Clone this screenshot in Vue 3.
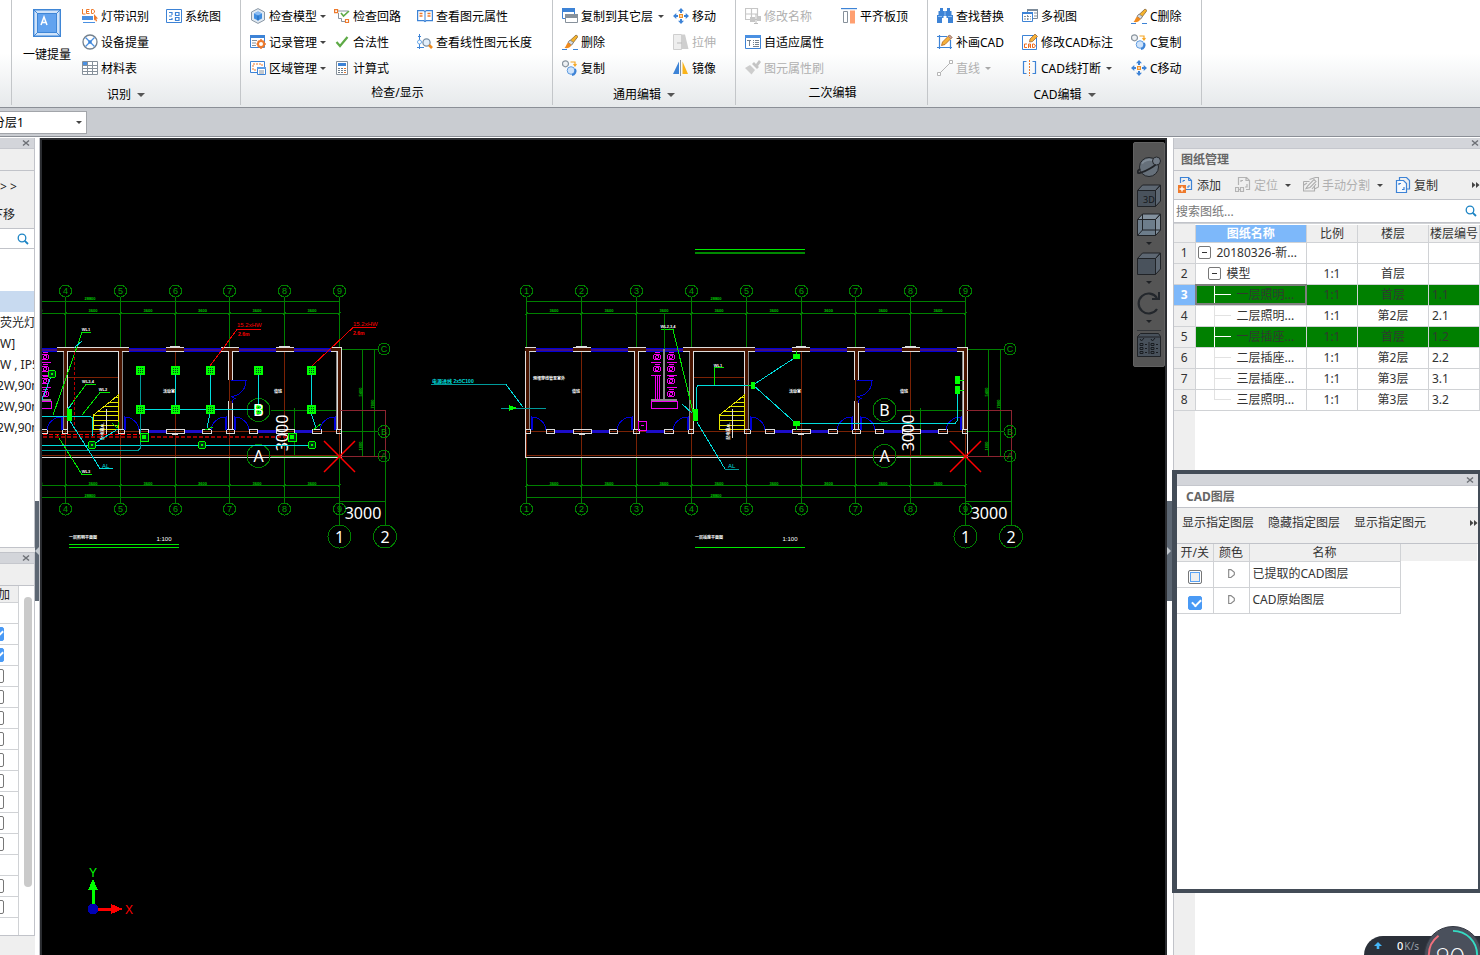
<script setup>
import { ref } from 'vue'

const groups = [
  {
    key: 'identify', caption: '识别', menu: true, big: { icon: 'extract', label: '一键提量' },
    cols: [
      [{ icon: 'led', label: '灯带识别' }, { icon: 'device', label: '设备提量' }, { icon: 'sheet', label: '材料表' }],
      [{ icon: 'system', label: '系统图' }]
    ]
  },
  {
    key: 'inspect', caption: '检查/显示', menu: false,
    cols: [
      [{ icon: 'model', label: '检查模型', menu: true }, { icon: 'record', label: '记录管理', menu: true }, { icon: 'region', label: '区域管理', menu: true }],
      [{ icon: 'loop', label: '检查回路' }, { icon: 'tick', label: '合法性' }, { icon: 'calc', label: '计算式' }],
      [{ icon: 'book', label: '查看图元属性' }, { icon: 'length', label: '查看线性图元长度' }]
    ]
  },
  {
    key: 'common', caption: '通用编辑', menu: true,
    cols: [
      [{ icon: 'layers', label: '复制到其它层', menu: true }, { icon: 'brush', label: '删除' }, { icon: 'copy', label: '复制' }],
      [{ icon: 'move', label: '移动' }, { icon: 'stretch', label: '拉伸', off: true }, { icon: 'mirror', label: '镜像' }]
    ]
  },
  {
    key: 'second', caption: '二次编辑', menu: false,
    cols: [
      [{ icon: 'rename', label: '修改名称', off: true }, { icon: 'adapt', label: '自适应属性' }, { icon: 'paint', label: '图元属性刷', off: true }],
      [{ icon: 'align', label: '平齐板顶' }]
    ]
  },
  {
    key: 'cadedit', caption: 'CAD编辑', menu: true,
    cols: [
      [{ icon: 'find', label: '查找替换' }, { icon: 'pencil', label: '补画CAD' }, { icon: 'line', label: '直线', off: true, menu: true }],
      [{ icon: 'views', label: '多视图' }, { icon: 'cadnote', label: '修改CAD标注' }, { icon: 'break', label: 'CAD线打断', menu: true }],
      [{ icon: 'brush', label: 'C删除' }, { icon: 'copy', label: 'C复制' }, { icon: 'move', label: 'C移动' }]
    ]
  }
]

const floor = ref('分层1')
const search = ref('')
const components = [
  { text: '' }, { text: '' }, { text: '', sel: true },
  { text: '荧光灯' }, { text: 'W]' }, { text: 'W , IP5' },
  { text: '2W,90m', cut: true }, { text: '2W,90m', cut: true }, { text: '2W,90m', cut: true }
]
const flags = ref([null, true, true, false, false, false, false, false, false, false, false, false, null, false, false])

const drawings = [
  { name: '20180326-新...', level: 0, ratio: '', floor: '', code: '' },
  { name: '模型', level: 1, ratio: '1:1', floor: '首层', code: '' },
  { name: '一层照明...', level: 2, ratio: '1:1', floor: '首层', code: '1.1', on: true, cur: true },
  { name: '二层照明...', level: 2, ratio: '1:1', floor: '第2层', code: '2.1' },
  { name: '一层插座...', level: 2, ratio: '1:1', floor: '首层', code: '1.2', on: true },
  { name: '二层插座...', level: 2, ratio: '1:1', floor: '第2层', code: '2.2' },
  { name: '三层插座...', level: 2, ratio: '1:1', floor: '第3层', code: '3.1' },
  { name: '三层照明...', level: 2, ratio: '1:1', floor: '第3层', code: '3.2', last: true }
]
const layers = ref([{ name: '已提取的CAD图层', on: false }, { name: 'CAD原始图层', on: true }])

const plans = [{ key: 'light', dx: -626 }, { key: 'socket', dx: 0 }]
const axes = Array.from({ length: 9 }, (_, i) => ({ n: i + 1, x: Math.round(526 + i * 54.9) + 0.5 }))
const spans = axes.slice(0, 8).map((a, i) => (a.x + axes[i + 1].x) / 2)
const topWindows = [536, 591, 646, 755, 810, 865, 920]
const topWalls = [[525, 536], [573, 591], [628, 646], [683, 755], [792, 810], [847, 865], [902, 920], [957, 968]]
const bottomWindows = [[554, 573], [591, 609], [646, 664], [774, 792], [810, 828], [883, 902], [920, 938]]
const bottomWalls = [[525, 530], [546, 554], [573, 591], [609, 617], [633, 639], [664, 673], [688, 693], [744, 750], [765, 774], [792, 810], [828, 837], [852, 860], [875, 883], [902, 920], [938, 947], [962, 967]]
const partitions = [[525, 351, 430], [634, 351, 430], [689, 351, 430], [744, 351, 430], [854, 351, 380], [854, 401, 430], [963, 351, 430]]
const doorsRight = [531, 750, 860]
const doorsLeft = [632, 688, 852, 961]
const steps = [[740, 397], [735, 402], [730, 406], [724, 411], [719, 415], [719, 420], [719, 425], [719, 429]]
const bigAxes = [{ t: '1', x: 965.5, y: 536.5 }, { t: '2', x: 1011, y: 536.5 }, { t: 'A', x: 884.5, y: 456 }, { t: 'B', x: 884.5, y: 410 }]
const sideAxes = [{ t: 'C', y: 349 }, { t: 'B', y: 431.5 }, { t: 'A', y: 456 }]
const lampX = [140, 175, 210, 258, 311]
const pans = [[657, 357], [657, 369], [671, 357], [671, 369], [671, 381], [671, 394]]
</script>

<template>
  <div class="app">
    <svg class="defs" aria-hidden="true">
      <symbol id="i-extract" viewBox="0 0 28 28">
        <path d="M.7 .7h26.6v26.6H.7z" fill="#cfe3fa" stroke="#3f86d6" stroke-width="1.4" /><path d="M4.500 4.500h19v19h-19z" fill="#62a3ef" stroke="#3f86d6" /><path d="M1 1l4 4M27 1l-4 4M1 27l4-4M27 27l-4-4" stroke="#3f86d6" />
        <path d="M8 16l3-8 3 8M9 13.500h4" fill="none" stroke="#fff" stroke-width="1.500" />
      </symbol>
      <symbol id="i-led" viewBox="0 0 16 16">
        <path d="M.500 1v5h3M7.500 1.500h-3v4h3M4.500 3.500H7M9.500 1.500h1.500l1.500 1.200v1.600l-1.500 1.200H9.500z" fill="none" stroke="#ee7a2c" />
        <path d="M0 8h11v4H0z" fill="#4a90e2" /><path d="M1 14.500h12" stroke="#4a90e2" /><path d="M12 6l4 4.500-1.800.3 1 2.200-1.200.6-1-2.200L12 12.500z" fill="#ee7a2c" />
      </symbol>
      <symbol id="i-device" viewBox="0 0 16 16"><circle cx="8" cy="8" r="7" fill="#fff" stroke="#74808c" stroke-width="1.300" /><path d="M3.500 3.500l9 9M12.500 3.500l-9 9" stroke="#4a90e2" stroke-width="1.300" /><circle cx="8" cy="8" r="1.800" fill="#3d83d6" /></symbol>
      <symbol id="i-sheet" viewBox="0 0 16 16"><path d="M.500 1.500h15v13H.500z" fill="#fff" stroke="#87919b" /><path d="M1 2h4v3H1z" fill="#4a90e2" /><path d="M.500 5.500h15M.500 8.500h15M.500 11.500h15M5.500 1.500v13M10.500 1.500v13" stroke="#87919b" /></symbol>
      <symbol id="i-system" viewBox="0 0 16 16"><path d="M.500 1.500h15v13H.500z" fill="#fff" stroke="#3d83d6" /><path d="M3 4.500h3M3 8h3M3 11.500h3M6 4v3M6 10v2M9.500 4.500h3.500v3H9.500zM9.500 9.500h3.500v3H9.500z" fill="none" stroke="#3d83d6" stroke-width="1.200" /></symbol>
      <symbol id="i-model" viewBox="0 0 16 16"><path d="M8 .600l6.500 3.400v8L8 15.400 1.500 12V4z" fill="#dfe9f3" stroke="#8b98a5" /><path d="M8 3.500l4 2v5l-4 2-4-2v-5z" fill="#3f8de0" /><path d="M4 5.500l4 2 4-2-4-2z" fill="#8bbcf2" /><path d="M8 7.500v5" stroke="#1f66b5" /></symbol>
      <symbol id="i-record" viewBox="0 0 16 16"><path d="M.500 1.500h14v12H.500z" fill="#fff" stroke="#3d83d6" /><path d="M0 1h15v3H0z" fill="#3d83d6" /><path d="M2 6.500h5M2 9h4M2 11.500h4" stroke="#87919b" /><circle cx="11" cy="10" r="3" fill="none" stroke="#ee7a2c" stroke-width="2" /><path d="M11 5v2M11 13v2M6.500 10h1.500M14 10h2M8 7l1 1M14 7l-1 1M8 13l1-1M14 13l-1-1" stroke="#ee7a2c" stroke-width="1.500" /></symbol>
      <symbol id="i-region" viewBox="0 0 16 16"><path d="M.500 1.500h14v11H.500z" fill="#fff" stroke="#3d83d6" /><path d="M3 4h9v6H3z" fill="none" stroke="#ee7a2c" stroke-dasharray="2 1" /><path d="M7.500 7.500h8v7h-8z" fill="#fff" stroke="#3d83d6" /><path d="M7 7h9v2H7z" fill="#5b9be6" /><path d="M9 11h5M9 13h5" stroke="#87919b" /></symbol>
      <symbol id="i-loop" viewBox="0 0 16 16"><path d="M.600 1.600h3v3h-3zM11.500 11.500h3v3h-3z" fill="#fff" stroke="#ee7a2c" stroke-width="1.200" /><path d="M4 3h10M4.500 5v5.500h3v3H11" fill="none" stroke="#8a959f" /><path d="M7 5l2.500 3L15 3" fill="none" stroke="#5eaa46" stroke-width="1.600" /></symbol>
      <symbol id="i-tick" viewBox="0 0 16 16"><path d="M2.500 8l3.500 4 7.500-9" fill="none" stroke="#5eaa46" stroke-width="2.200" /></symbol>
      <symbol id="i-calc" viewBox="0 0 16 16"><path d="M2.500 1.500h11v13h-11z" fill="#fff" stroke="#87919b" /><path d="M4 3h8v3H4z" fill="#3d83d6" /><path d="M4 8.500h8M4 10.500h8M4 12.500h8" stroke="#6f7c88" stroke-dasharray="2 1" /><path d="M10 8.500h2M10 12.500h2" stroke="#ee7a2c" /></symbol>
      <symbol id="i-book" viewBox="0 0 16 16"><path d="M.600 2.600h6l1.400.900 1.400-.900h6v10h-6l-1.400 1-1.400-1h-6z" fill="#fff" stroke="#3d83d6" stroke-width="1.200" /><path d="M8 3.500v10" stroke="#3d83d6" /><path d="M2.500 5.500h3M2.500 8h3M10.500 5.500h3M10.500 8h3" stroke="#ee7a2c" stroke-width="1.300" /></symbol>
      <symbol id="i-length" viewBox="0 0 16 16"><path d="M2.500 0v15M1 2.500h3M0 13.500h7" stroke="#3d83d6" /><circle cx="2.500" cy="8" r="2" fill="#fff" stroke="#6aa8e8" /><circle cx="9.500" cy="8.500" r="3.600" fill="#e3effb" stroke="#7990a6" stroke-width="1.300" /><path d="M12 11l3 3" stroke="#ee8a1c" stroke-width="2.600" /></symbol>
      <symbol id="i-layers" viewBox="0 0 16 16"><path d="M.500 .500h12v10H.500z" fill="#fff" stroke="#3d83d6" /><path d="M0 0h13v4H0z" fill="#3d83d6" /><path d="M3.500 6.500h12v8h-12z" fill="#fff" stroke="#87919b" /><path d="M3 6h13v4H3z" fill="#87919b" /></symbol>
      <symbol id="i-brush" viewBox="0 0 16 16"><path d="M14 1l2 1.500L9.500 11 6 8.500z" fill="#f5b32c" stroke="#8c6a3a" stroke-width=".800" /><path d="M8 6l3.500 2.500-2 2.500L6 8.500z" fill="#d7dbe0" stroke="#6d737a" stroke-width=".700" /><path d="M6 8.500L9.500 11c-1.500 3-4 3.500-7 3 1.500-1.500 2-4 3.500-5.500z" fill="#f08a1d" /><path d="M0 15.500h5M11 15.500h5" stroke="#3d83d6" /></symbol>
      <symbol id="i-copy" viewBox="0 0 16 16"><circle cx="3.500" cy="3.800" r="3" fill="#eef1f4" stroke="#8a959f" stroke-width="1.200" /><circle cx="9" cy="10.500" r="3.800" fill="#cfe3fa" stroke="#5e9be0" /><path d="M13 9a4 4 0 0 1-3 6" fill="none" stroke="#3d83d6" stroke-width="2" /><path d="M8.500 2h4.500v3M11.500 4l1.500 2 1.500-2" fill="none" stroke="#f5a623" stroke-width="1.200" /></symbol>
      <symbol id="i-move" viewBox="0 0 16 16"><path d="M6.600 6.600h2.800v2.800H6.600z" fill="#fff" stroke="#f0932b" stroke-width="1.200" /><path d="M8 0l3 3.300H9V5H7V3.300H5zM8 16l3-3.300H9V11H7v1.700H5zM0 8l3.300-3v2H5v2H3.300v2zM16 8l-3.300-3v2H11v2h1.700v2z" fill="#3d83d6" /></symbol>
      <symbol id="i-stretch" viewBox="0 0 16 16"><path d="M.500 .500h8v15h-8z" fill="#eee" stroke="#cfcfcf" /><path d="M9 .500h3L15.500 15H9z" fill="#cfcfcf" /><path d="M4 9h5" stroke="#bbb" /></symbol>
      <symbol id="i-mirror" viewBox="0 0 16 16"><path d="M6 1.500V14H0z" fill="#3d83d6" /><path d="M9.500 1.500V14H15z" fill="#f9b31a" /><path d="M7.500 0v16" stroke="#8a959f" /></symbol>
      <symbol id="i-rename" viewBox="0 0 16 16"><path d="M.500 .500h12v11H.500zM.500 6h12M6.500 .500v11" fill="none" stroke="#c6c6c6" stroke-width="1.200" /><path d="M5 9h5v5H5zM12 8h4v5h-4z" fill="#c6c6c6" /><path d="M11 6v10M9 15.500h4" stroke="#bbb" /></symbol>
      <symbol id="i-adapt" viewBox="0 0 16 16"><path d="M.500 1.500h15v13H.500z" fill="#fff" stroke="#3d83d6" /><path d="M0 1h16v3H0z" fill="#4a90e2" /><path d="M2 6.500h4M4.500 6v6M8 6.500h1M10 6.500h4M8 8.500h1M10 8.500h4M8 10.500h1M10 10.500h4M8 12.500h6" stroke="#75828f" /></symbol>
      <symbol id="i-paint" viewBox="0 0 16 16"><path d="M0 8l5-3 5 5-3.500 4.500z" fill="#cdcdcd" /><path d="M7 4l2-2 5 5-2 2zM11 4l3-4 2 2-3 4z" fill="#c4c4c4" /></symbol>
      <symbol id="i-align" viewBox="0 0 16 16"><path d="M0 .500h16" stroke="#3d83d6" stroke-width="1.400" /><path d="M2.500 3.500h4v11h-4z" fill="#fff" stroke="#87919b" /><path d="M9 2.500h5v13H9z" fill="#ff9f70" /></symbol>
      <symbol id="i-find" viewBox="0 0 16 16"><path d="M3 0h3v3h4V0h3v3h1.500v4H16v8h-5v-5H9.500V8h-3v2H5v5H0V7h1.500V3H3z" fill="#3d83d6" /><path d="M1 8.500h4M11 8.500h4M8 3v5" stroke="#8fc0f4" /></symbol>
      <symbol id="i-pencil" viewBox="0 0 16 16"><path d="M2.500 1v14M13.500 6v9M0 2.500h10M0 13.500h15" fill="none" stroke="#3d83d6" stroke-width="1.200" /><path d="M12.500 1L15 3.500l-7 7-3.500 1 1-3.500z" fill="#f5b13b" stroke="#b1641c" stroke-width=".800" /><path d="M12.500 1L15 3.500l-1.300 1.300L11.200 2.300z" fill="#d8a1a1" stroke="#666" stroke-width=".500" /></symbol>
      <symbol id="i-line" viewBox="0 0 16 16"><path d="M2 14L14 2" stroke="#b5b5b5" /><path d="M.500 12.500h3v3h-3zM12.500 .500h3v3h-3z" fill="#fff" stroke="#b5b5b5" /></symbol>
      <symbol id="i-views" viewBox="0 0 16 16"><path d="M5.500 1.500h10v9h-10z" fill="#fff" stroke="#7d8b99" /><path d="M5 1h11v2H5z" fill="#7d8b99" /><path d="M.500 4.500h10v9H.500z" fill="#fff" stroke="#3d83d6" /><path d="M0 4h11v2H0z" fill="#3d83d6" /><path d="M2 8.500h7M2 11h7M5.500 7v5" stroke="#87919b" stroke-dasharray="2 1" /><path d="M12 5h3M12 8h3" stroke="#87919b" /></symbol>
      <symbol id="i-cadnote" viewBox="0 0 16 16"><path d="M.500 1.500h14v14H.500z" fill="#fff" stroke="#3d83d6" /><path d="M5 10H2.500v3.500H5M6.500 14v-4h2v4M6.500 12h2M10.500 10h1.500l1.200 1v1.500l-1.200 1h-1.500z" fill="none" stroke="#ee6a1c" /><path d="M13 0l2.500 2.500-5 5-3 .500.500-3z" fill="#f5b13b" stroke="#9a6a3c" stroke-width=".800" /></symbol>
      <symbol id="i-break" viewBox="0 0 16 16"><path d="M4.500 1.500h-3v12h3M10.500 1.500h3v12h-3" fill="none" stroke="#3d83d6" stroke-width="1.200" /><path d="M7.500 0v16" stroke="#ee7a2c" stroke-dasharray="2 1" /></symbol>
      <symbol id="i-add" viewBox="0 0 16 16"><path d="M2.500 6V.500h8l3 3v9H8" fill="none" stroke="#3d83d6" stroke-width="1.200" /><path d="M5 5V3.500h2M11 8v2H9M10.500 .500v3h3" fill="none" stroke="#3d83d6" /><path d="M0 8h8v8H0z" fill="#ee7a2c" /><path d="M4 9.500v5M1.500 12h5" stroke="#fff" stroke-width="1.400" /></symbol>
      <symbol id="i-locate" viewBox="0 0 16 16"><path d="M3.500 8V.500h8l3 3v9H11M6 5V3.500h2M12 7v3h-2M.500 10.500h3v4h-3zM5.500 10.500h3v4h-3zM3 12.500h3M11 .500v3h3" fill="none" stroke="#b3b3b3" stroke-width="1.200" /></symbol>
      <symbol id="i-split" viewBox="0 0 16 16"><path d="M.500 4.500h6M11.500 9v5H.500V4.500M6.500 2.500l6-2h3v9.500l-4 2M3 11.500l2-3 6-6 2 2-6 6zM1 8l3-2M9 12l4-5" fill="none" stroke="#aeaeae" stroke-width="1.100" /></symbol>
      <symbol id="i-dup" viewBox="0 0 16 16"><path d="M4.500 3V.500h7l3 3V12H12" fill="none" stroke="#3d83d6" stroke-width="1.200" /><path d="M1.500 3.500h7l3 3v9h-10zM4 8V6.500h2M9 10v2.500H7" fill="#f5f9fe" stroke="#3d83d6" stroke-width="1.200" /></symbol>
      <symbol id="i-search" viewBox="0 0 12 12"><circle cx="5" cy="5" r="3.800" fill="none" stroke="#1c84c4" stroke-width="1.300" /><path d="M7.800 7.800L11 11" stroke="#1c84c4" stroke-width="1.800" /></symbol>
      <symbol id="i-x" viewBox="0 0 8 8"><path d="M1 1.500l6 5M7 1.500l-6 5" stroke="#6d7076" stroke-width="1.500" /></symbol>
      <symbol id="i-more" viewBox="0 0 8 8"><path d="M0 1l3.500 3L0 7zM4 1l3.500 3L4 7z" fill="#444" /></symbol>
      <symbol id="v-orbit" viewBox="0 0 24 24"><circle cx="12" cy="12" r="9.500" fill="#66707a" stroke="#23262a" /><path d="M5 8.500a8 6 0 0 1 11-3" fill="none" stroke="#808b96" stroke-width="2" /><path d="M3 14C0 16-.500 18.500 3 18 9 16.500 18 11 20 8" fill="none" stroke="#202327" stroke-width="1.800" /><circle cx="19.500" cy="6" r="4" fill="#727c87" stroke="#23262a" /></symbol>
      <symbol id="v-cube3d" viewBox="0 0 24 24"><path d="M.500 6.500h18v16H.500z" fill="#49525c" stroke="#202327" /><path d="M.500 6.500l5-5.500h18l-5 5.500zM18.500 6.500l5-5.500v16l-5 5.500z" fill="#5d6772" stroke="#202327" /></symbol>
      <symbol id="v-wire" viewBox="0 0 24 24"><path d="M.500 6.500h18v16H.500z" fill="#6d7d8b" stroke="#202327" /><path d="M.500 6.500l5-5.500h18l-5 5.500zM18.500 6.500l5-5.500v16l-5 5.500z" fill="#83919e" stroke="#202327" /><path d="M5.500 1v16h18M5.500 17l-5 5.500" fill="none" stroke="#202327" /></symbol>
      <symbol id="v-rotate" viewBox="0 0 24 24"><path d="M20 7A10 10 0 1 0 20 18" fill="none" stroke="#23272c" stroke-width="2.200" /><path d="M22 1v7h-7" fill="none" stroke="#23272c" stroke-width="2" /></symbol>
      <symbol id="v-list" viewBox="0 0 24 24"><path d="M.500 3.500l3-3h18l2 3v20H.500z" fill="#48515b" stroke="#202327" /><path d="M.500 4h23M12 9v12" stroke="#202327" /><path d="M3 6l1.500 2L7 5M14 6l1.500 2L18 5M3 10.500h3v2H3zM8 11.500h2M3 14.500h3v2H3zM8 15.500h2M3 18.500h3v2H3zM8 19.500h2M14 10.500h3v2h-3zM19 11.500h2M14 14.500h3v2h-3zM19 15.500h2M14 18.500h3v2h-3zM19 19.500h2" fill="none" stroke="#191c20" /></symbol>
    </svg>

    <header class="ribbon">
      <div class="group lead"></div>
      <section v-for="g in groups" :key="g.key" class="group" :class="g.key">
        <div class="cols">
          <button v-if="g.big" class="big" type="button"><svg class="bigicon"><use :href="'#i-' + g.big.icon" /></svg>{{ g.big.label }}</button>
          <div v-for="(c, ci) in g.cols" :key="ci" class="col">
            <button v-for="t in c" :key="t.label" class="tool" type="button" :disabled="t.off">
              <svg class="icon"><use :href="'#i-' + t.icon" /></svg><span>{{ t.label }}</span><i v-if="t.menu" class="arrow"></i>
            </button>
          </div>
        </div>
        <button v-if="g.menu" class="caption menu" type="button">{{ g.caption }}<i class="arrow wide"></i></button>
        <div v-else class="caption">{{ g.caption }}</div>
      </section>
    </header>

    <div class="floorbar">
      <div class="floorbox">
        <select v-model="floor" aria-label="楼层"><option>分层1</option></select><i class="arrow"></i>
      </div>
    </div>

    <main class="work">
      <aside class="left">
        <section class="lp">
          <div class="titlebar"><button type="button" aria-label="关闭"><svg class="x"><use href="#i-x" /></svg></button></div>
          <div class="lphead"></div>
          <div class="lptools"><button type="button">&gt; &gt;</button><button type="button" class="down">下移</button></div>
          <div class="lpsearch"><button type="button" aria-label="搜索"><svg class="mag"><use href="#i-search" /></svg></button></div>
          <ul class="lplist"><li v-for="(c, i) in components" :key="i" :class="{ sel: c.sel, cut: c.cut }">{{ c.text }}</li></ul>
        </section>
        <section class="lp2">
          <div class="titlebar"><button type="button" aria-label="关闭"><svg class="x"><use href="#i-x" /></svg></button></div>
          <div class="lphead"></div>
          <div class="props">
            <div class="flags">
              <div class="flaghead">附加</div>
              <div v-for="(f, i) in flags" :key="i" class="flag"><input v-if="f !== null" v-model="flags[i]" type="checkbox" class="check" :aria-label="'附加 ' + (i + 1)"></div>
            </div>
            <div class="scroll"><div class="thumb"></div></div>
          </div>
        </section>
      </aside>
      <div class="split"><div class="grip toleft"></div></div>

      <section class="canvas">
        <svg class="cad" viewBox="42 140 1124 815" width="1124" height="815">
          <g v-for="p in plans" :key="p.key" :transform="`translate(${p.dx} 0)`">
            <g class="dk"><path d="M526 301.500H966M526 313.500H966M526 485.500H966M526 497.500H966M967 349.500H1004M965 431.500H1004M988.500 349V457M1000.500 349V457M897 410.500H966M897 456.500H966M920.500 408V458M965 501.500H1011" /></g>
            <g v-for="a in axes" :key="a.n">
              <path class="dk" :d="`M${a.x} 297V349M${a.x} 458V503`" /><path class="br" :d="`M${a.x} 349V457`" />
              <circle class="dk" :cx="a.x" cy="291" r="6" /><circle class="dk" :cx="a.x" cy="509" r="6" />
              <text class="num" :x="a.x" y="294">{{ a.n }}</text><text class="num" :x="a.x" y="512">{{ a.n }}</text>
              <path class="dk" :d="`M${a.x - 1.500} 315l3-3M${a.x - 1.500} 487l3-3`" />
            </g>
            <g v-for="s in spans" :key="s"><text class="dim" :x="s" y="312">3600</text><text class="dim" :x="s" y="485">3600</text></g>
            <text class="dim" x="716" y="300">28800</text><text class="dim" x="716" y="497">28800</text>
            <text class="dim" transform="translate(988 392) rotate(-90)">5400</text><text class="dim" transform="translate(1000 404) rotate(-90)">7000</text><text class="dim" transform="translate(988 446) rotate(-90)">1600</text>

            <path class="br" d="M526 431.500H966M526 455.500H966M692 377.500H746" />
            <g v-for="w in topWindows" :key="'tw' + w"><rect :x="w" y="348" width="37" height="4" fill="#470f78" /><path class="bl" :d="`M${w} 348.500h37M${w} 351.500h37`" /></g>
            <g v-for="w in topWalls" :key="'w' + w[0]"><rect :x="w[0]" y="348" :width="w[1] - w[0]" height="3" fill="#481400" /><path class="wl" :d="`M${w[0]} 347.500H${w[1]}M${w[0]} 351.500H${w[1]}`" /></g>
            <g v-for="(w, i) in partitions" :key="'p' + i"><rect :x="w[0] + 1" :y="w[1]" width="3" :height="w[2] - w[1]" fill="#481400" /><path class="wl" :d="`M${w[0] + .500} ${w[1]}V${w[2]}M${w[0] + 4.500} ${w[1]}V${w[2]}`" /></g>
            <path class="gy" d="M529.500 352V430M689.500 352V430M748.500 352V430M962.500 352V430" />
            <rect v-for="w in bottomWindows" :key="'bw' + w[0]" :x="w[0]" y="430" :width="w[1] - w[0]" height="3" fill="#1c0cc8" />
            <g v-for="w in bottomWalls" :key="'b' + w[0]"><path class="wl" :d="`M${w[0]}.500 429.500H${w[1]}.500V433.500H${w[0]}.500z`" /></g>
            <path class="wl" d="M525.500 430V457.500H967.500V348M576 346.500h11M796 346.500h10M905 346.500h11M579 434.500h6M798 434.500h6" />
            <path v-for="d in doorsRight" :key="'dr' + d" class="bl" :d="`M${d}.500 430V417A15 14 0 0 1 ${d + 15} 430M${d + 1}.500 430V418`" />
            <path v-for="d in doorsLeft" :key="'dl' + d" class="bl" :d="`M${d}.500 430V417A15 14 0 0 0 ${d - 15} 430M${d - 1}.500 430V418`" />
            <path class="bl" d="M857 380.500H872C872 389 866 396 857 396.500M857 396.500l4 2-3 2v2" />

            <path class="ye" d="M719.500 430V415L744.500 395V429" /><path v-for="s in steps" :key="s[1]" class="ye" :d="`M${s[0]} ${s[1]}.500H744`" />
            <path class="wl" d="M732.500 409V438" /><text class="tiny" transform="translate(730 431) rotate(-90)">配电箱AL</text>

            <path d="M664 349V400M651 400h26" stroke="#888" stroke-width="2" />
            <g class="ma">
              <path d="M651.500 401.500h26v7h-26zM638.500 421.500h8v9h-8zM641 425.500h3M651 362.500h10M651 375.500h10M667 362.500h10M667 375.500h10M667 387.500h10M655.500 376V400M659.500 376V400M657.500 376V400" />
              <g v-for="(b, i) in pans" :key="i"><ellipse :cx="b[0]" :cy="b[1]" rx="4" ry="3" /><ellipse :cx="b[0]" :cy="b[1]" rx="1.500" ry="1.500" /><path :d="`M${b[0] - 2} ${b[1] - 5}.500h5`" /></g>
            </g>
            <path d="M966 410.500H1011.500V456.500H966" fill="none" stroke="#8c2430" />
            <path class="dk" d="M965.500 457V525M1011.500 457V525" />
            <g v-for="s in sideAxes" :key="s.t"><circle class="dk" cx="1010" :cy="s.y" r="6" /><text class="num" x="1010" :y="s.y + 3">{{ s.t }}</text></g>
            <g v-for="b in bigAxes" :key="b.t"><circle class="dk" :cx="b.x" :cy="b.y" r="11.500" /><text class="bigt" :x="b.x" :y="b.y + 6">{{ b.t }}</text></g>
            <text class="bigt" x="989" y="519">3000</text><text class="bigt" transform="translate(914 433) rotate(-90)">3000</text>
            <path class="cross" d="M950 441l31 31M981 441l-31 31" />
            <text class="tiny" x="795" y="393">活动室</text><text class="tiny" x="904" y="393">值班</text>
            <text class="title" x="709" y="539">{{ p.key === 'light' ? '一层照明平面图' : '一层插座平面图' }}</text><text class="scale" x="790" y="541">1:100</text>
            <path class="gr" d="M695 547.500H805" />
          </g>

          <g>
            <path class="gr" d="M69 544.500H179M53 415L82 332.500H91M67 410L86 384.500H96M82 415L100 392.500H110M57 435L82 474.500H92" />
            <path d="M74.500 352V431" stroke="#b00" stroke-dasharray="3 2" /><path d="M43 434.500H140" stroke="#f00" stroke-dasharray="4 2" /><path d="M43 437H292" stroke="#900" stroke-width="2" stroke-dasharray="4 2" />
            <path class="cy" d="M42 416.500H90L92.500 418V436M42 445.500H312M74 348l8-7M42 400L52 374M67 410l6-7M92 445L118 429" />
            <path class="te" d="M42 450.500H138L140.500 448V370" />
            <path class="cy" d="M70 421L100 468.500H113M175.500 374V406M210.500 374V406M258.500 374V406M311.500 374V406M140 409.500H258M210 413L207 428M311 413L316 428" />
            <path class="gr" d="M205 430l8-3M313 430l8-6M112 423l5 5 2-6" />
            <template v-for="y in [366, 405]" :key="y"><g v-for="x in lampX" :key="x"><rect :x="x - 4" :y="y" width="9" height="9" fill="#0f0" /><path :d="`M${x - 2} ${y + 2.500}h6M${x - 2} ${y + 4.500}h6M${x - 2} ${y + 6.500}h6`" stroke="#042" stroke-dasharray="1 1" /></g></template>
            <g v-for="c in [[52, 374], [92, 445], [202, 445], [312, 445]]" :key="c[0]"><circle :cx="c[0]" :cy="c[1]" r="4" fill="#031" stroke="#0f0" /><circle :cx="c[0]" :cy="c[1]" r="1.500" fill="#0f0" /></g>
            <g v-for="x in [144, 292]" :key="x"><rect :x="x - 3.500" y="433.500" width="8" height="8" fill="#031" stroke="#0f0" /><circle :cx="x" cy="437" r="2.500" fill="#0f0" /></g>
            <rect x="67" y="409" width="5" height="12" fill="#0f0" />
            <text class="bigt" x="258.500" y="416">B</text>
            <path class="re" d="M210 366L237 329.500H261M312 366L353 327.500H376" />
            <text class="red" x="237" y="327">15.2xHW</text><text class="red s" x="238" y="336">2.6m</text><text class="red" x="353" y="326">15.2xHW</text><text class="red s" x="353" y="335">2.6m</text>
            <text class="tiny" x="86" y="331">WL1</text><text class="tiny" x="88" y="383">WL3,4</text><text class="tiny" x="103" y="391">WL2</text><text class="tiny" x="86" y="473">WL3</text><text class="cyt" x="102" y="468">AL</text>
          </g>

          <g>
            <path class="gr" d="M695 249.500H805M661 329.500H673L693 412M724 367.500H714.500V385" /><path d="M695 253H805" stroke="#008a00" stroke-width="2" /><path class="dk" d="M664.500 313V349" />
            <text class="cyt long" x="432" y="383">电源进线 2x5C100</text>
            <path class="te" d="M431 384.500H506M501 408H546M725 469.500H739" /><path class="cy" d="M506 384.500L523 407M682 404l10 9M696.500 409V388L698 385.500H752M697 422L725 469M753 385L796 357M753 385L796 423.500H955L957.500 420V392" />
            <path d="M509 405l8 3-8 3zM693 409h5v12h-5zM751 382h4v7h-4zM793 354h7v5h-7zM793 421h7v5h-7zM955 376h5v8h-5zM955 386h5v8h-5z" fill="#0f0" /><path class="gr" d="M796.500 351V354M796.500 426V430M748 385.500H751M960 380.500h4M960 390.500h4" />
            <text class="tiny" x="549" y="380">预埋穿线管至室外</text><text class="tiny" x="576" y="393">值班</text><text class="tiny" x="668" y="328">WL2,3,4</text><text class="tiny" x="718" y="367">WL1</text><text class="cyt" x="728" y="468">AL</text>
          </g>

          <g>
            <path d="M93 909V889" stroke="#0f0" stroke-width="3" /><path d="M88 890l5-11 5 11z" fill="#0f0" /><path d="M95 909H112" stroke="#f00" stroke-width="3" /><path d="M111 904l12 5-12 5z" fill="#f00" /><circle cx="93" cy="909" r="5.500" fill="#0000b4" />
            <text class="ucs y" x="93" y="877">Y</text><text class="ucs r" x="129" y="914">X</text>
          </g>
        </svg>
        <nav class="viewbar" aria-label="视图">
          <button type="button" aria-label="动态观察"><svg><use href="#v-orbit" /></svg></button>
          <button type="button" class="three"><svg><use href="#v-cube3d" /></svg><span>3D</span></button>
          <button type="button" class="drop" aria-label="线框"><svg><use href="#v-wire" /></svg><i class="arrow"></i></button>
          <button type="button" class="drop" aria-label="实体"><svg><use href="#v-cube3d" /></svg><i class="arrow"></i></button>
          <button type="button" class="drop" aria-label="旋转"><svg><use href="#v-rotate" /></svg><i class="arrow"></i></button>
          <button type="button" class="last" aria-label="显示设置"><svg><use href="#v-list" /></svg></button>
        </nav>
      </section>
      <div class="split right"><div class="grip"></div></div>

      <aside class="side">
        <div class="titlebar edge"><button type="button" aria-label="关闭"><svg class="x"><use href="#i-x" /></svg></button></div>
        <h2>图纸管理</h2>
        <div class="sidetools">
          <button class="tool" type="button"><svg class="icon"><use href="#i-add" /></svg><span>添加</span></button>
          <button class="tool" type="button" disabled><svg class="icon"><use href="#i-locate" /></svg><span>定位</span><i class="arrow dark"></i></button>
          <button class="tool" type="button" disabled><svg class="icon"><use href="#i-split" /></svg><span>手动分割</span><i class="arrow dark"></i></button>
          <button class="tool" type="button"><svg class="icon"><use href="#i-dup" /></svg><span>复制</span></button>
          <button class="more" type="button" aria-label="更多"><svg class="x"><use href="#i-more" /></svg></button>
        </div>
        <div class="search"><input v-model="search" type="text" placeholder="搜索图纸..." aria-label="搜索图纸"><svg class="mag"><use href="#i-search" /></svg></div>
        <div class="sheet">
          <table class="draws">
            <colgroup><col class="c0"><col><col class="c2"><col class="c3"><col class="c4"></colgroup>
            <thead><tr><th></th><th class="act">图纸名称</th><th>比例</th><th>楼层</th><th>楼层编号</th></tr></thead>
            <tbody>
              <tr v-for="(d, i) in drawings" :key="i" :class="{ on: d.on, cur: d.cur }">
                <th>{{ i + 1 }}</th>
                <td class="name"><div class="tree" :class="['l' + d.level, { end: d.last }]"><button v-if="d.level < 2" class="fold" type="button" aria-label="折叠"></button><i v-else class="branch"></i><span>{{ d.name }}</span></div></td>
                <td class="mid">{{ d.ratio }}</td><td class="mid">{{ d.floor }}</td><td>{{ d.code }}</td>
              </tr>
            </tbody>
          </table>
        </div>

        <section class="float">
          <div class="titlebar"><button type="button" aria-label="关闭"><svg class="x"><use href="#i-x" /></svg></button></div>
          <h2>CAD图层</h2>
          <div class="layertools"><button type="button">显示指定图层</button><button type="button">隐藏指定图层</button><button type="button">显示指定图元</button><button class="more" type="button" aria-label="更多"><svg class="x"><use href="#i-more" /></svg></button></div>
          <table class="layers">
            <colgroup><col class="k0"><col class="k1"><col class="k2"><col></colgroup>
            <thead><tr><th>开/关</th><th>颜色</th><th>名称</th><th></th></tr></thead>
            <tbody><tr v-for="(l, i) in layers" :key="i"><td class="mid low"><input :id="'ly' + i" v-model="l.on" type="checkbox" class="check"></td><td class="mid"><svg class="tri" viewBox="0 0 8 8"><path d="M1.500 .500v7h2l3-2.500v-2l-3-2.500z" fill="#fff" stroke="#888" /></svg></td><td><label :for="'ly' + i">{{ l.name }}</label></td><td></td></tr></tbody>
          </table>
        </section>

        <div class="meter"><div class="pill"><svg viewBox="0 0 8 8"><path d="M4 0l4 4H5.300v3H2.700V4H0z" fill="#45b6f7" /></svg><b>0</b><span>K/s</span></div><div class="dial"><svg viewBox="0 0 58 58"><path d="M4 30A25 25 0 0 1 14 9" fill="none" stroke="#f0707c" stroke-width="2" /><path d="M29 4A25 25 0 0 1 54 29" fill="none" stroke="#35dcc4" stroke-width="2" /></svg><span>90</span></div></div>
      </aside>
    </main>
  </div>
</template>

<style>
html, body { margin: 0; overflow: hidden; }
</style>

<style scoped>
* { box-sizing: border-box; }
.app { height: 100vh; display: flex; flex-direction: column; overflow: hidden; font: 12px/16px "Noto Sans", "Noto Sans CJK SC", sans-serif; color: #000; background: #fff; }
.defs { position: absolute; width: 0; height: 0; }
button { font: inherit; color: inherit; background: none; border: 0; padding: 0; margin: 0; white-space: nowrap; }
.arrow { flex: none; width: 0; height: 0; border: 3px solid transparent; border-top-color: #444; border-bottom: 0; margin-left: 5px; }
.arrow.wide { border-width: 4px 4px 0; border-top-color: #555; margin-left: 6px; }
.arrow.dark { border-top-color: #444; margin-left: 7px; }

.ribbon { display: flex; flex: none; border-bottom: 1px solid #8b8f96; background: linear-gradient(#fff 0, #fff 50%, #e6e9eb 100%); overflow: hidden; padding-bottom: 2px; }
.group { border-right: 1px solid #c3c6c9; flex: none; display: flex; flex-direction: column; align-items: center; padding-top: 3px; }
.lead { width: 12px; }
.cols { display: grid; padding-left: 9px; width: 100%; height: 78px; }
.identify .cols { grid-template-columns: 70px 84px 74px; padding-left: 0; }
.inspect .cols { grid-template-columns: 84px 83px 135px; }
.common .cols { grid-template-columns: 111px 62px; }
.second .cols { grid-template-columns: 96px 86px; }
.cadedit .cols { grid-template-columns: 85px 109px 70px; }
.inspect .arrow { margin-left: 3px; }
.tool { display: flex; align-items: center; height: 26px; }
.tool span { margin: 2px 0 0 3px; }
.tool:disabled { color: #b0b0b0; }
.tool:disabled .arrow:not(.dark) { border-top-color: #aaa; }
.icon { width: 16px; height: 16px; flex: none; }
.big { display: flex; flex-direction: column; align-items: center; padding: 6px 0 0; gap: 10px; justify-content: flex-start; }
.bigicon { width: 28px; height: 28px; }
.caption { display: flex; align-items: center; height: 20px; margin-bottom: 4px; padding: 4px 0 0 2px; }
.caption.menu { height: 24px; margin-bottom: 0; padding-left: 0; }

.floorbar { flex: none; height: 29px; background: #c9ccd1; border-bottom: 1px solid #8b8f96; padding-top: 3px; }
.floorbox { width: 87px; height: 23px; background: #fff; border: 1px solid #a2a5aa; border-left: 0; display: flex; align-items: center; overflow: hidden; }
.floorbox select { appearance: none; border: 0; background: none; font: inherit; flex: 1; margin-left: -7px; padding: 0; }
.floorbox .arrow { margin-right: 4px; }

.work { flex: 1; min-height: 0; display: flex; padding-top: 1px; background: #fff; }
.titlebar { height: 11px; background: #d3d5da; display: flex; justify-content: flex-end; align-items: center; padding-right: 4px; border-bottom: 1px solid #c5c7cd; }
.titlebar.edge { padding-right: 1px; }
.titlebar button { display: flex; }
.x { width: 8px; height: 8px; }
.mag { width: 12px; height: 12px; flex: none; }

.left { width: 35px; flex: none; display: flex; flex-direction: column; overflow: hidden; background: #efefef; color: #222; }
.lp { height: 410px; flex: none; display: flex; flex-direction: column; border-right: 1px solid #c1c3c9; border-bottom: 1px solid #c1c3c9; }
.lphead { height: 22px; border-bottom: 1px solid #c1c3c9; flex: none; }
.lptools { height: 58px; flex: none; display: flex; flex-direction: column; align-items: flex-start; gap: 12px; padding-top: 8px; border-bottom: 1px solid #c1c3c9; overflow: hidden; }
.down { margin-left: -9px; }
.lpsearch { height: 20px; flex: none; background: #fff; border-bottom: 1px solid #c1c3c9; display: flex; justify-content: flex-end; align-items: center; padding-right: 5px; }
.lpsearch button { display: flex; }
.lplist { list-style: none; margin: 0; padding: 0; background: #fff; flex: 1; }
.lplist li { height: 21px; line-height: 21px; overflow: hidden; white-space: nowrap; }
.lplist .sel { background: #c8daf0; }
.lplist .cut { text-indent: -3px; }
.lp2 { flex: 1; min-height: 0; display: flex; flex-direction: column; margin: 4px 0 19px; border-right: 1px solid #c1c3c9; border-bottom: 1px solid #c1c3c9; border-top: 1px solid #c1c3c9; }
.lp2 .titlebar, .lp .titlebar { flex: none; }
.props { flex: 1; min-height: 0; display: flex; background: #fff; }
.flags { width: 19px; border-right: 1px solid #d0d2d5; flex: none; }
.flaghead { height: 17px; line-height: 18px; background: #efefef; border-bottom: 1px solid #d0d2d5; display: flex; justify-content: flex-end; padding-right: 8px; white-space: nowrap; }
.flag { height: 21px; border-bottom: 1px solid #d0d2d5; display: flex; justify-content: flex-end; align-items: center; padding-right: 14px; }
.scroll { flex: 1; padding: 11px 2px 48px 5px; }
.thumb { width: 8px; height: 100%; border-radius: 4px; background: #cacaca; }
.check { appearance: none; width: 14px; height: 14px; flex: none; margin: 0; border: 1px solid #777; border-radius: 2px; background: #fff; position: relative; }
.check:checked { background: #4a9af5; border-color: #4a9af5; }
.check:checked::after { content: ""; position: absolute; left: 3px; top: 2px; width: 7px; height: 4px; border: solid #fff; border-width: 0 0 2px 2px; transform: rotate(-45deg); }

.split { width: 5px; flex: none; background: #fff; border-right: 1px solid #c1c3c9; padding-top: 363px; }
.grip { height: 100px; background: #5d6773; display: flex; align-items: center; }
.grip::after { content: ""; border: 4px solid transparent; border-left-color: #c2c8ce; border-right: 0; }
.grip.toleft::after { border-left: 0; border-right: 4px solid #c2c8ce; }

.canvas { flex: 1; min-width: 0; background: #000; border: 2px solid #2a2c30; border-bottom: 0; position: relative; overflow: hidden; }
.cad { display: block; }
svg.cad path, svg.cad circle, svg.cad ellipse, svg.cad rect { shape-rendering: crispEdges; }
.dk { fill: none; stroke: #008000; }
.gr { fill: none; stroke: #00e800; }
.br { fill: none; stroke: #7a2205; }
.bl { fill: none; stroke: #0000d8; }
.wl { fill: none; stroke: #dedede; }
.gy { fill: none; stroke: #888; }
.ye { fill: none; stroke: #e6e600; }
.ma { fill: none; stroke: #f000f0; }
.re { fill: none; stroke: #f00000; }
svg.cad .cross { fill: none; stroke: #ff0000; stroke-width: 1.5; shape-rendering: auto; }
.cy { fill: none; stroke: #00dede; }
.te { fill: none; stroke: #009a9a; }
.cad text { font-family: "Liberation Sans", "Noto Sans CJK SC", sans-serif; }
.num { font-size: 9px; fill: #00a000; text-anchor: middle; }
.dim { font-size: 4px; font-weight: bold; fill: #00c800; text-anchor: middle; }
.tiny { font-size: 4px; font-weight: bold; fill: #fff; text-anchor: middle; }
.title { font-size: 4px; fill: #fff; text-anchor: middle; font-weight: bold; }
.scale { font-size: 6px; fill: #fff; text-anchor: middle; }
.cad .bigt { font-family: "Noto Sans", sans-serif; font-size: 16px; fill: #fff; text-anchor: middle; }
.red { font-size: 6px; fill: #f00; }
.red.s { font-size: 5px; font-weight: bold; }
.cyt { font-size: 6px; fill: #00dede; }
.cyt.long { font-size: 5px; font-weight: bold; }
.ucs { font-size: 12px; text-anchor: middle; }
.ucs.y { fill: #0f0; }
.ucs.r { fill: #f00; }
.viewbar { position: absolute; right: 0; top: 2px; width: 32px; height: 225px; background: #555; border-radius: 2px; border: 1px solid #626262; display: flex; flex-direction: column; align-items: center; padding-top: 12px; }
.viewbar button { display: flex; flex-direction: column; align-items: center; height: 29px; position: relative; flex: none; }
.viewbar svg { width: 24px; height: 24px; flex: none; }
.viewbar .drop { height: 39px; }
.viewbar .arrow { margin: 5px 0 0; border-top-color: #1e2125; }
.three span { position: absolute; left: 6px; top: 9px; font-size: 9px; line-height: 14px; color: #15181b; }
.viewbar .last { border-top: 1px solid #33363a; padding-top: 2px; }

.split.right { width: 6px; border: 0; }
.split.right .grip { width: 5px; }
.side { width: 307px; flex: none; background: #efefef; position: relative; display: flex; flex-direction: column; color: #333; border-left: 1px solid #c1c3c9; }
h2 { margin: 0; font-size: 12px; line-height: 21px; height: 22px; padding-left: 9px; color: #666; font-weight: bold; border-bottom: 1px solid #c1c3c9; }
.side > h2 { padding-left: 7px; }
.sidetools { height: 29px; display: flex; align-items: center; padding-left: 4px; gap: 14px; border-bottom: 1px solid #c1c3c9; flex: none; }
.sidetools .tool:nth-child(3), .sidetools .tool:nth-child(4) { margin-left: -2px; }
.more { margin-left: auto; display: flex; }
.search { display: flex; align-items: center; height: 23px; background: #fff; border-bottom: 1px solid #c1c3c9; padding-right: 3px; flex: none; }
.search input { flex: 1; min-width: 0; border: 0; padding: 2px 0 0 2px; font: inherit; background: none; outline: 0; }
.search input::placeholder { color: #777; opacity: 1; }
.sheet { flex: 1; background: linear-gradient(90deg, #efefef 21px, #fff 21px); padding-top: 1px; border-top: 1px solid #d0d2d5; }
table { border-collapse: collapse; table-layout: fixed; width: 100%; }
.c0 { width: 21px; } .c2 { width: 51px; } .c3 { width: 71px; } .c4 { width: 51px; }
th, td { border: 1px solid #d0d2d5; border-width: 0 1px 1px 0; padding: 0; font-weight: normal; white-space: nowrap; overflow: hidden; }
th { background: #efefef; }
.draws thead th { height: 17px; line-height: 14px; padding-top: 2px; }
.draws tbody th, .draws tbody td { padding-top: 1px; }
.draws thead .act { background: #7db8fa; color: #fff; font-weight: bold; }
.draws tbody tr { height: 21px; }
.draws td { background: #fff; padding-left: 3px; }
.draws tbody .name { padding: 0; }
.draws .mid, .mid { text-align: center; padding-left: 0; }
.draws .on td { background: #008000; color: #2f3a2f; }
.draws .cur th { background: #7db8fa; color: #fff; font-weight: bold; }
.cur .name { outline: 2px solid #7e7e7e; outline-offset: -2px; }
.tree { display: flex; align-items: center; height: 20px; padding-left: 2px; }
.tree.l1 { padding-left: 12px; }
.tree.l2 { padding-left: 18px; }
.tree span { margin: 1px 0 0 6px; }
.fold { width: 13px; height: 13px; border: 1px solid #777; border-radius: 2px; background: #fff; display: flex; align-items: center; justify-content: center; }
.fold::after { content: ""; width: 5px; height: 1px; background: #333; }
.branch { width: 17px; height: 20px; border-left: 1px solid #e2e2e2; display: flex; align-items: center; }
.branch::after { content: ""; width: 16px; height: 1px; background: #e2e2e2; }
.end .branch { height: 10px; align-self: flex-start; align-items: flex-end; }
.on .branch { border-color: #fff; }
.on .branch::after { background: #fff; }

.float { position: absolute; left: -2px; right: 0; top: 332px; height: 423px; border: 5px solid #434c57; border-width: 4px 2px 4px 5px; background: #fff; }
.float .titlebar { height: 12px; }
.layertools { height: 36px; display: flex; align-items: flex-start; padding: 7px 0 0 5px; gap: 14px; background: #efefef; border-bottom: 1px solid #c1c3c9; }
.layertools .more { padding-top: 4px; }
.k0 { width: 36px; } .k1 { width: 36px; } .k2 { width: 151px; }
.layers thead th { height: 17px; line-height: 15px; padding-top: 1px; border-bottom-color: #d0d2d5; }
.layers th:last-child, .layers td:last-child { border-color: transparent; }
.layers tbody tr { height: 26px; }
.layers td { padding-left: 3px; }
.layers .mid { padding: 0; }
.low .check { display: block; margin: 6px auto 0; }
.low .check:not(:checked) { box-shadow: inset 0 0 0 1px #fff, inset 0 0 0 2px #5aa3f5; background: #eee; }
.tri { width: 9px; height: 9px; }

.meter { position: absolute; right: 0; bottom: 0; width: 116px; height: 29px; overflow: hidden; }
.pill { position: absolute; right: 0; bottom: 0; width: 116px; height: 19px; border-radius: 19px 0 0 0; background: #2b3039; color: #fff; display: flex; align-items: center; padding-left: 10px; }
.pill svg { width: 8px; height: 8px; }
.pill b { margin-left: 15px; font-size: 11px; font-weight: 500; }
.pill span { font-size: 10px; color: #9aa0aa; margin-left: 1px; }
.dial { position: absolute; right: -2px; top: 0; width: 58px; height: 58px; border-radius: 50%; background: #4a505c; border: 1px solid #333842; color: #fff; text-align: center; }
.dial svg { width: 56px; height: 56px; display: block; }
.dial span { position: absolute; left: 0; right: 6px; top: 15px; font: 300 25px/28px Lato, "Open Sans", sans-serif; }
</style>
